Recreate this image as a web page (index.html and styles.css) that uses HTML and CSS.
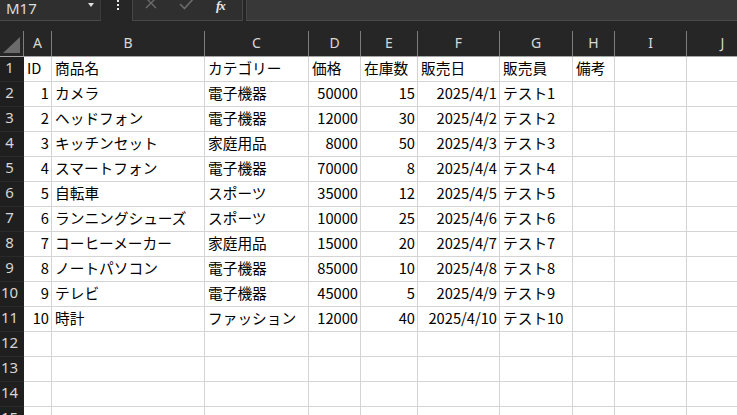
FILE: index.html
```html
<!DOCTYPE html>
<html lang="ja">
<head>
    <meta charset="UTF-8">
    <title>Book1 - Excel</title>
    <link rel="stylesheet" href="styles.css">
</head>
<body>

    <div class="toolbar">
        <div class="namebox">
            <span class="name">M17</span>
            <span class="drop"></span>
        </div>
        <svg class="dots" width="4" height="12" viewBox="0 0 4 12">
            <rect x="1" y="0" width="2" height="2" fill="#e8e8e8"/>
            <rect x="1" y="4" width="2" height="2" fill="#e8e8e8"/>
            <rect x="1" y="8" width="2" height="2" fill="#e8e8e8"/>
        </svg>
        <div class="fxbox">
            <svg class="ico-x" width="12" height="12" viewBox="0 0 12 12">
                <path d="M1 1 L11 11 M11 1 L1 11" stroke="#6b6b6b" stroke-width="1.4" fill="none"/>
            </svg>
            <svg class="ico-ok" width="15" height="14" viewBox="0 0 15 14">
                <path d="M1 8 L5.5 12.5 L14 3" stroke="#6b6b6b" stroke-width="1.6" fill="none"/>
            </svg>
            <span class="fx">fx</span>
        </div>
        <div class="formula"></div>
    </div>

    <div class="sheet">
        <div class="row head">
            <div class="corner"><span class="tri"></span></div>
            <div class="col">A</div><div class="col">B</div><div class="col">C</div><div class="col">D</div><div class="col">E</div>
            <div class="col">F</div><div class="col">G</div><div class="col">H</div><div class="col">I</div><div class="col">J</div>
        </div>

        <div class="row">
            <div class="rh">1</div>
            <div class="c">ID</div><div class="c">商品名</div><div class="c">カテゴリー</div><div class="c">価格</div><div class="c">在庫数</div>
            <div class="c">販売日</div><div class="c">販売員</div><div class="c">備考</div><div class="c"></div><div class="c"></div>
        </div>
        <div class="row">
            <div class="rh">2</div>
            <div class="c n">1</div><div class="c">カメラ</div><div class="c">電子機器</div><div class="c n">50000</div><div class="c n">15</div>
            <div class="c n">2025/4/1</div><div class="c">テスト1</div><div class="c"></div><div class="c"></div><div class="c"></div>
        </div>
        <div class="row">
            <div class="rh">3</div>
            <div class="c n">2</div><div class="c">ヘッドフォン</div><div class="c">電子機器</div><div class="c n">12000</div><div class="c n">30</div>
            <div class="c n">2025/4/2</div><div class="c">テスト2</div><div class="c"></div><div class="c"></div><div class="c"></div>
        </div>
        <div class="row">
            <div class="rh">4</div>
            <div class="c n">3</div><div class="c">キッチンセット</div><div class="c">家庭用品</div><div class="c n">8000</div><div class="c n">50</div>
            <div class="c n">2025/4/3</div><div class="c">テスト3</div><div class="c"></div><div class="c"></div><div class="c"></div>
        </div>
        <div class="row">
            <div class="rh">5</div>
            <div class="c n">4</div><div class="c">スマートフォン</div><div class="c">電子機器</div><div class="c n">70000</div><div class="c n">8</div>
            <div class="c n">2025/4/4</div><div class="c">テスト4</div><div class="c"></div><div class="c"></div><div class="c"></div>
        </div>
        <div class="row">
            <div class="rh">6</div>
            <div class="c n">5</div><div class="c">自転車</div><div class="c">スポーツ</div><div class="c n">35000</div><div class="c n">12</div>
            <div class="c n">2025/4/5</div><div class="c">テスト5</div><div class="c"></div><div class="c"></div><div class="c"></div>
        </div>
        <div class="row">
            <div class="rh">7</div>
            <div class="c n">6</div><div class="c">ランニングシューズ</div><div class="c">スポーツ</div><div class="c n">10000</div><div class="c n">25</div>
            <div class="c n">2025/4/6</div><div class="c">テスト6</div><div class="c"></div><div class="c"></div><div class="c"></div>
        </div>
        <div class="row">
            <div class="rh">8</div>
            <div class="c n">7</div><div class="c">コーヒーメーカー</div><div class="c">家庭用品</div><div class="c n">15000</div><div class="c n">20</div>
            <div class="c n">2025/4/7</div><div class="c">テスト7</div><div class="c"></div><div class="c"></div><div class="c"></div>
        </div>
        <div class="row">
            <div class="rh">9</div>
            <div class="c n">8</div><div class="c">ノートパソコン</div><div class="c">電子機器</div><div class="c n">85000</div><div class="c n">10</div>
            <div class="c n">2025/4/8</div><div class="c">テスト8</div><div class="c"></div><div class="c"></div><div class="c"></div>
        </div>
        <div class="row">
            <div class="rh">10</div>
            <div class="c n">9</div><div class="c">テレビ</div><div class="c">電子機器</div><div class="c n">45000</div><div class="c n">5</div>
            <div class="c n">2025/4/9</div><div class="c">テスト9</div><div class="c"></div><div class="c"></div><div class="c"></div>
        </div>
        <div class="row">
            <div class="rh">11</div>
            <div class="c n">10</div><div class="c">時計</div><div class="c">ファッション</div><div class="c n">12000</div><div class="c n">40</div>
            <div class="c n">2025/4/10</div><div class="c">テスト10</div><div class="c"></div><div class="c"></div><div class="c"></div>
        </div>
        <div class="row">
            <div class="rh">12</div>
            <div class="c"></div><div class="c"></div><div class="c"></div><div class="c"></div><div class="c"></div>
            <div class="c"></div><div class="c"></div><div class="c"></div><div class="c"></div><div class="c"></div>
        </div>
        <div class="row">
            <div class="rh">13</div>
            <div class="c"></div><div class="c"></div><div class="c"></div><div class="c"></div><div class="c"></div>
            <div class="c"></div><div class="c"></div><div class="c"></div><div class="c"></div><div class="c"></div>
        </div>
        <div class="row">
            <div class="rh">14</div>
            <div class="c"></div><div class="c"></div><div class="c"></div><div class="c"></div><div class="c"></div>
            <div class="c"></div><div class="c"></div><div class="c"></div><div class="c"></div><div class="c"></div>
        </div>
        <div class="row">
            <div class="rh">15</div>
            <div class="c"></div><div class="c"></div><div class="c"></div><div class="c"></div><div class="c"></div>
            <div class="c"></div><div class="c"></div><div class="c"></div><div class="c"></div><div class="c"></div>
        </div>
    </div>

</body>
</html>
```

FILE: styles.css
```css
body {
    margin: 0;
    background-color: #262626;
    overflow: hidden;
    height: 415px;
    font-family: "Noto Sans CJK JP", sans-serif;
}

/* 数式バー */
.toolbar {
    display: flex;
    align-items: flex-start;
    height: 21px;
    overflow: hidden;
}
.namebox {
    display: flex;
    align-items: flex-start;
    width: 101px;
    height: 21px;
    box-sizing: border-box;
    background-color: #2f2f2f;
    border-bottom: 1px solid #4a4a4a;
    border-right: 1px solid #3a3a3a;
}
.name {
    font-family: "Noto Sans", sans-serif;
    font-size: 15px;
    line-height: 17px;
    color: #dcdcdc;
    padding-left: 6px;
}
.drop {
    margin-left: auto;
    margin-right: 6px;
    margin-top: 3px;
    width: 0;
    height: 0;
    border-left: 3.5px solid transparent;
    border-right: 3.5px solid transparent;
    border-top: 4px solid #e0e0e0;
}
.dots {
    margin-left: 15px;
}
.fxbox {
    display: flex;
    align-items: flex-start;
    margin-left: 12px;
    width: 111px;
    height: 21px;
    box-sizing: border-box;
    background-color: #2f2f2f;
    border: 1px solid #474747;
    border-top: none;
}
.ico-x {
    margin-left: 12px;
    margin-top: -3px;
}
.ico-ok {
    margin-left: 22px;
    margin-top: -4px;
}
.fx {
    margin-left: 22px;
    font-family: "Liberation Serif", serif;
    font-style: italic;
    font-weight: bold;
    font-size: 13px;
    line-height: 12px;
    color: #e8e8e8;
    letter-spacing: -1px;
}
.formula {
    flex: 1;
    margin-left: 3px;
    height: 21px;
    box-sizing: border-box;
    background-color: #383838;
    border-bottom: 1px solid #4a4a4a;
    border-left: 1px solid #454545;
}

/* シート */
.sheet {
    margin-top: 10px;
}
.row {
    display: grid;
    grid-template-columns: 24px 28px 153px 104px 52px 57px 82px 73px 42px 72px 72px;
    height: 25px;
}
.head {
    background-color: #262626;
    border-bottom: 1px solid #a6a6a6;
}
.corner {
    position: relative;
    border-right: 1px solid #7d7d7d;
}
.tri {
    position: absolute;
    right: 3px;
    bottom: 3px;
    width: 0;
    height: 0;
    border-left: 17px solid transparent;
    border-bottom: 16px solid #6b6b6b;
}
.col {
    font-family: "Noto Sans", sans-serif;
    font-size: 14px;
    line-height: 24px;
    color: #d8d8d8;
    text-align: center;
    border-right: 1px solid #7d7d7d;
}
.rh {
    box-sizing: border-box;
    background-color: #1f1f1f;
    border-bottom: 1px solid #2a2a2a;
    font-family: "Noto Sans", sans-serif;
    font-size: 15px;
    line-height: 21px;
    color: #d6d6d6;
    text-align: center;
    padding-right: 5px;
}
.c {
    box-sizing: border-box;
    background-color: #fff;
    border-right: 1px solid #d4d4d4;
    border-bottom: 1px solid #d4d4d4;
    font-size: 14.7px;
    line-height: 22px;
    color: #000;
    padding: 0 3px;
    white-space: nowrap;
    overflow: hidden;
}
.c.n {
    text-align: right;
    padding-right: 2px;
}
```
